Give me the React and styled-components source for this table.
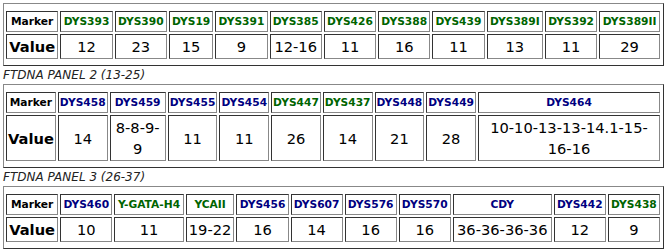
import React from 'react';
import styled, { createGlobalStyle } from 'styled-components';

const green = '#006400';
const navy = '#000080';

const GlobalStyle = createGlobalStyle`
  body {
    margin: 0;
    background: #fff;
    font-family: "DejaVu Sans", Verdana, sans-serif;
    color: #000;
  }
`;

const Page = styled.div`
  padding: 3px 4px 0 3px;
`;

const PanelTitle = styled.div`
  font-style: italic;
  font-size: 12px;
  line-height: 18px;
  color: #222;
`;

const Frame = styled.div`
  border: 1px solid;
  border-color: #888 #333 #333 #888;
  padding: 5px 1px 4px 0;
`;

const Table = styled.table`
  width: 100%;
  border-collapse: separate;
  border-spacing: 2px;
`;

const Cell = styled.td`
  border: 1px solid;
  border-color: #333 #888 #888 #333;
  text-align: center;
  padding: 1px;
`;

const Head = styled(Cell)`
  font-weight: bold;
  font-size: 10.67px;
  line-height: 17px;
  color: ${(p) => p.$tone || '#000'};
`;

const RowLabel = styled(Cell)`
  font-weight: bold;
  font-size: 14.67px;
  line-height: 21px;
`;

const Value = styled(Cell)`
  font-size: 14.67px;
  line-height: 21px;
`;

const panels = [
  {
    title: null,
    markers: [
      ['DYS393', green, '12'],
      ['DYS390', green, '23'],
      ['DYS19', green, '15'],
      ['DYS391', green, '9'],
      ['DYS385', green, '12-16'],
      ['DYS426', green, '11'],
      ['DYS388', green, '16'],
      ['DYS439', green, '11'],
      ['DYS389I', green, '13'],
      ['DYS392', green, '11'],
      ['DYS389II', green, '29'],
    ],
  },
  {
    title: 'FTDNA PANEL 2 (13-25)',
    markers: [
      ['DYS458', navy, '14'],
      ['DYS459', navy, '8-8-9-9'],
      ['DYS455', navy, '11'],
      ['DYS454', navy, '11'],
      ['DYS447', green, '26'],
      ['DYS437', green, '14'],
      ['DYS448', navy, '21'],
      ['DYS449', navy, '28'],
      ['DYS464', navy, '10-10-13-13-14.1-15-16-16'],
    ],
  },
  {
    title: 'FTDNA PANEL 3 (26-37)',
    markers: [
      ['DYS460', navy, '10'],
      ['Y-GATA-H4', green, '11'],
      ['YCAII', green, '19-22'],
      ['DYS456', navy, '16'],
      ['DYS607', navy, '14'],
      ['DYS576', navy, '16'],
      ['DYS570', navy, '16'],
      ['CDY', navy, '36-36-36-36'],
      ['DYS442', navy, '12'],
      ['DYS438', green, '9'],
    ],
  },
];

const Panel = ({ title, markers }) => (
  <>
    {title && <PanelTitle>{title}</PanelTitle>}
    <Frame>
      <Table>
        <tbody>
          <tr>
            <Head>Marker</Head>
            {markers.map(([name, tone]) => (
              <Head key={name} $tone={tone}>{name}</Head>
            ))}
          </tr>
          <tr>
            <RowLabel>Value</RowLabel>
            {markers.map(([name, , value]) => (
              <Value key={name}>{value}</Value>
            ))}
          </tr>
        </tbody>
      </Table>
    </Frame>
  </>
);

export default function App() {
  return (
    <Page>
      <GlobalStyle />
      {panels.map((p, i) => (
        <Panel key={i} title={p.title} markers={p.markers} />
      ))}
    </Page>
  );
}
